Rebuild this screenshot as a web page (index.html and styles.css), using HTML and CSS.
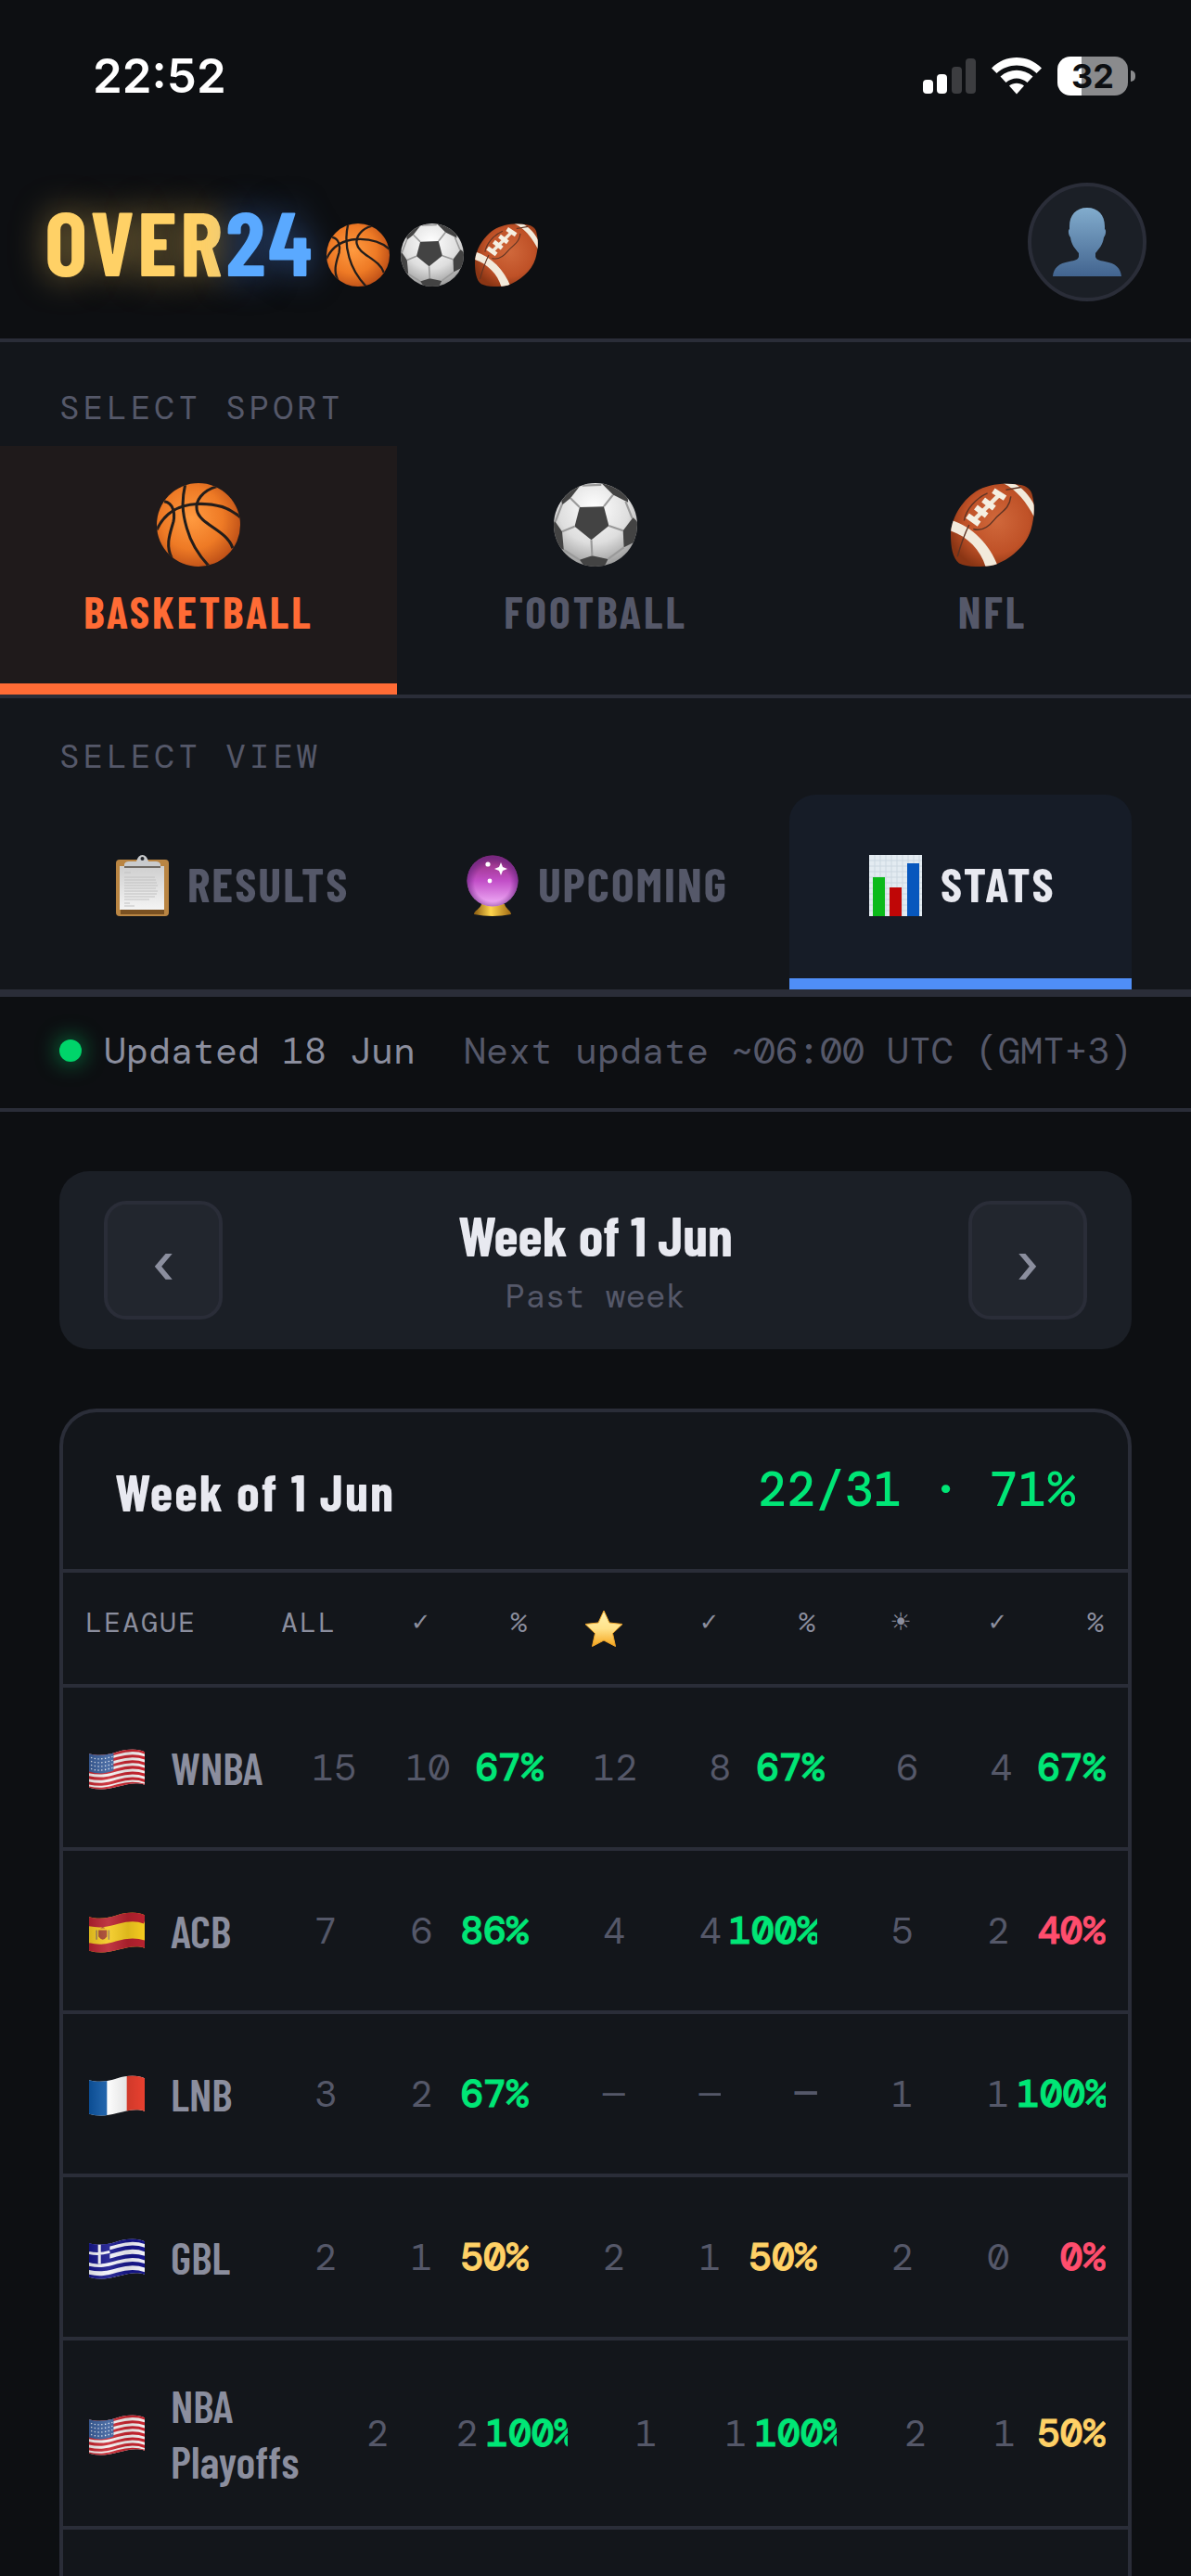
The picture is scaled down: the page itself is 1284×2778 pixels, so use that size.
FILE: index.html
```html
<!DOCTYPE html>
<html lang="en">
<head>
    <meta charset="UTF-8">
    <meta name="viewport" content="width=device-width, initial-scale=1.0">
    <title>OVER24</title>
    <link rel="stylesheet" href="styles.css">
</head>
<body>
    <!-- shared icons -->
    <svg class="sprite" aria-hidden="true">
        <defs>
            <radialGradient id="orangeBall" cx="42%" cy="42%" r="62%">
                <stop offset="0" stop-color="#ff9a40"/><stop offset="0.6" stop-color="#ee7a25"/><stop offset="1" stop-color="#bd4f17"/>
            </radialGradient>
            <radialGradient id="whiteBall" cx="48%" cy="30%" r="70%">
                <stop offset="0" stop-color="#ffffff"/><stop offset="0.6" stop-color="#dedede"/><stop offset="1" stop-color="#9c9c9c"/>
            </radialGradient>
            <radialGradient id="brownBall" cx="55%" cy="45%" r="60%">
                <stop offset="0" stop-color="#d0683b"/><stop offset="0.65" stop-color="#bf5127"/><stop offset="1" stop-color="#8a3514"/>
            </radialGradient>
            <linearGradient id="person" x1="0" y1="0" x2="0" y2="1">
                <stop offset="0" stop-color="#82accd"/><stop offset="1" stop-color="#42648f"/>
            </linearGradient>
            <linearGradient id="paper" x1="0" y1="0" x2="0" y2="1">
                <stop offset="0" stop-color="#cfcfcf"/><stop offset="1" stop-color="#f4f4f4"/>
            </linearGradient>
            <linearGradient id="orb" x1="0" y1="0" x2="0" y2="1">
                <stop offset="0" stop-color="#8d2a70"/><stop offset="0.5" stop-color="#c24fc8"/><stop offset="1" stop-color="#f3b4fa"/>
            </linearGradient>
            <radialGradient id="orbEdge" cx="50%" cy="55%" r="50%">
                <stop offset="0.7" stop-color="#6d2683" stop-opacity="0"/><stop offset="1" stop-color="#6d2683" stop-opacity="0.7"/>
            </radialGradient>
            <linearGradient id="gold" x1="0" y1="0" x2="1" y2="0">
                <stop offset="0" stop-color="#8a5a10"/><stop offset="0.45" stop-color="#ffd54d"/><stop offset="1" stop-color="#a06a14"/>
            </linearGradient>
            <linearGradient id="starFill" x1="0" y1="0" x2="0" y2="1">
                <stop offset="0" stop-color="#fff3b0"/><stop offset="0.5" stop-color="#ffe28a"/><stop offset="1" stop-color="#f5a51c"/>
            </linearGradient>
            <linearGradient id="shade" x1="0" y1="0" x2="1" y2="0">
                <stop offset="0" stop-color="#000" stop-opacity="0.12"/><stop offset="0.35" stop-color="#fff" stop-opacity="0.1"/><stop offset="0.7" stop-color="#000" stop-opacity="0.1"/><stop offset="1" stop-color="#000" stop-opacity="0"/>
            </linearGradient>
            <clipPath id="ballClip"><circle cx="50" cy="50" r="50"/></clipPath>
            <clipPath id="nflClip"><path d="M0 62C0 44 12 22 30 10C44 1 64 -1 82 2C91 3 97 8 98 16C101 28 100 42 96 56C90 76 70 92 52 98C38 101 20 101 10 96C2 90 0 76 0 62Z"/></clipPath>
            <clipPath id="flagClip"><path d="M0 5C12 8 20 6 30 3S50 -1 59 3V38C50 35 42 37 30 40S12 44 0 41Z"/></clipPath>
            <path id="wave" d="M-1 0C12 3 20 1 30 -2S50 -6 60 -2" fill="none"/>
        </defs>

        <symbol id="basketball" viewBox="0 0 100 100">
            <circle cx="50" cy="50" r="50" fill="url(#orangeBall)"/>
            <g clip-path="url(#ballClip)" fill="none" stroke="#221d1b" stroke-width="3.4">
                <path d="M34 2C30 20 30 34 36 54C41 72 50 86 62 99"/>
                <path d="M72 4C54 9 46 22 48 32C51 50 84 56 91 78"/>
                <path d="M0 56C10 34 28 26 48 25C70 24 88 30 100 41"/>
                <path d="M9 22C20 24 22 36 20 46C16 60 10 74 18 90"/>
            </g>
        </symbol>

        <symbol id="soccer" viewBox="0 0 100 100">
            <circle cx="50" cy="50" r="50" fill="url(#whiteBall)"/>
            <g clip-path="url(#ballClip)">
                <g fill="#434343">
                    <path d="M31 29L60 28L66 51L45 68L25 52Z"/>
                    <path d="M57 0L71 14L89 23L88 8L70 0Z"/>
                    <path d="M34 0L20 18L10 26L8 14L22 2Z"/>
                    <path d="M83 57L95 41L104 50L98 70L84 77Z"/>
                    <path d="M10 58L1 45L-4 60L4 76L12 80Z"/>
                    <path d="M31 92L46 87L65 91L60 101L38 101Z"/>
                </g>
                <path d="M60 28L71 14M31 29L20 18M66 51L83 57M25 52L10 58M45 68L46 87M84 77L65 91M12 80L31 92M94 42L86 22M2 46L10 25M34 3L57 2" fill="none" stroke="#9a9a9a" stroke-width="2.4"/>
            </g>
        </symbol>

        <symbol id="nfl" viewBox="0 0 100 100">
            <g clip-path="url(#nflClip)">
                <rect width="100" height="100" fill="url(#brownBall)"/>
                <path d="M60 -1C78 6 92 24 101 43V28C94 14 86 6 74 -1Z" fill="#f2eadb"/>
                <path d="M-1 44C26 52 47 74 57 101H42C36 80 20 64 -1 57Z" fill="#f2eadb"/>
                <path d="M8 88C12 74 16 62 22 50M16 45C18 32 30 18 44 12M72 16C70 32 60 34 52 44C44 54 36 58 27 55M66 8L84 5" fill="none" stroke="#5f3424" stroke-width="1.6"/>
                <path d="M26 46L60 12" stroke="#f2eadb" stroke-width="5"/>
                <path d="M20 39L34 49M30 29L43 39M39 20L52 30M51 9L65 18" stroke="#f5efe2" stroke-width="7"/>
            </g>
        </symbol>

        <symbol id="star" viewBox="0 0 42 40">
            <path d="M21 0L27 13L41 14.500L30.500 24.500L33.500 38.500L21 32L8.500 38.500L11.500 24.500L1 14.500L15 13Z" fill="url(#starFill)" stroke="#f0a52a" stroke-width="1" stroke-linejoin="round"/>
        </symbol>

        <symbol id="flag-us" viewBox="0 0 59 43">
            <g clip-path="url(#flagClip)">
                <rect width="59" height="43" fill="#f4f0f0"/>
                <g stroke="#c9252f" stroke-width="3">
                    <use href="#wave" y="6"/><use href="#wave" y="12"/><use href="#wave" y="18"/><use href="#wave" y="24"/><use href="#wave" y="30"/><use href="#wave" y="36"/><use href="#wave" y="41"/>
                </g>
                <path d="M0 4C10 7 18 6 26 3V23C18 26 10 27 0 24Z" fill="#3a5f9c"/>
                <path d="M2 9C10 12 18 10 25 8M2 13C10 16 18 14 25 12M2 17C10 20 18 18 25 16M2 21C10 24 18 22 25 20" fill="none" stroke="#dfe6f2" stroke-width="1.300" stroke-dasharray="1.300 2.400"/>
                <rect width="59" height="43" fill="url(#shade)"/>
            </g>
        </symbol>

        <symbol id="flag-es" viewBox="0 0 59 43">
            <g clip-path="url(#flagClip)">
                <rect width="59" height="43" fill="#f5cb1f"/>
                <use href="#wave" y="9" stroke="#b8222f" stroke-width="11"/>
                <use href="#wave" y="38" stroke="#b8222f" stroke-width="11"/>
                <path d="M10 19h9v7q-4.500 6-9 0Z" fill="#a8452d"/>
                <path d="M8 19v10M21 19v10" stroke="#9c7a55" stroke-width="1.500"/>
                <path d="M12 17q2.500-3 5 0Z" fill="#a8452d"/>
                <rect width="59" height="43" fill="url(#shade)"/>
            </g>
        </symbol>

        <symbol id="flag-fr" viewBox="0 0 59 43">
            <g clip-path="url(#flagClip)">
                <rect width="59" height="43" fill="#fbfbfb"/>
                <rect width="19" height="43" fill="#0d57a6"/>
                <rect x="40" width="19" height="43" fill="#e8402f"/>
                <rect width="59" height="43" fill="url(#shade)"/>
            </g>
        </symbol>

        <symbol id="flag-gr" viewBox="0 0 59 43">
            <g clip-path="url(#flagClip)">
                <rect width="59" height="43" fill="#f2f3fa"/>
                <g stroke="#16168c" stroke-width="4.200">
                    <use href="#wave" y="6"/><use href="#wave" y="14"/><use href="#wave" y="23"/><use href="#wave" y="31"/><use href="#wave" y="40"/>
                </g>
                <path d="M0 4C8 7 15 6 22 4V24C15 27 8 28 0 25Z" fill="#16168c"/>
                <path d="M11 5V27M0 15C8 17 15 16 22 14" fill="none" stroke="#f2f3fa" stroke-width="3"/>
                <rect width="59" height="43" fill="url(#shade)"/>
            </g>
        </symbol>
    </svg>

    <div class="status-bar">
        <span class="time">22:52</span>
        <div class="indicators">
            <svg class="signal" viewBox="0 0 57 40" aria-label="Signal">
                <rect x="0" y="24" width="11" height="15" rx="4" fill="#fff"/>
                <rect x="15" y="18" width="11" height="21" rx="4" fill="#fff"/>
                <rect x="31" y="10" width="11" height="29" rx="4" fill="#3c3d40"/>
                <rect x="46" y="1" width="11" height="38" rx="4" fill="#3c3d40"/>
            </svg>
            <svg class="wifi" viewBox="0 0 54 40" aria-label="Wi-Fi">
                <path d="M0 11.500C15 -3.800 39 -3.800 54 11.500L48.500 17C36.500 5.500 17.500 5.500 5.500 17Z" fill="#fff"/>
                <path d="M9.500 20.500C19.500 11.500 34.500 11.500 44.500 20.500L38.500 27C31.500 21 22.500 21 15.500 27Z" fill="#fff"/>
                <path d="M19 30.500C23.500 26.800 30.500 26.800 35 30.500L27 39.500Z" fill="#fff"/>
            </svg>
            <div class="battery"><span class="battery-level">32</span></div>
        </div>
    </div>

    <header class="header">
        <a class="logo" href="#"><span class="logo-over">OVER</span><span class="logo-24">24</span><span class="logo-balls"><svg><use href="#basketball"/></svg><svg><use href="#soccer"/></svg><svg><use href="#nfl"/></svg></span></a>
        <button class="avatar" aria-label="Profile">
            <svg viewBox="0 0 74 74"><path d="M37 0C49 0 56 8 56 20V23C58 24 57 30 55 32C54 40 50 44 46 49V53C47 56 50 57 56 58C68 60 73 65 74 74H0C1 65 6 60 18 58C24 57 27 56 28 53V49C24 44 20 40 19 32C17 30 16 24 18 23V20C18 8 25 0 37 0Z" fill="url(#person)"/></svg>
        </button>
    </header>

    <nav class="sports">
        <div class="section-label">SELECT SPORT</div>
        <div class="sport-tabs">
            <button class="sport-tab active"><svg><use href="#basketball"/></svg>BASKETBALL</button>
            <button class="sport-tab"><svg><use href="#soccer"/></svg>FOOTBALL</button>
            <button class="sport-tab"><svg><use href="#nfl"/></svg>NFL</button>
        </div>
    </nav>

    <nav class="views">
        <div class="section-label">SELECT VIEW</div>
        <div class="view-tabs">
            <button class="view-tab">
                <svg viewBox="0 0 57 66">
                    <rect y="5" width="57" height="61" rx="4" fill="#b98543"/>
                    <path d="M5 59H52V64H5Z" fill="#7a5122"/>
                    <rect x="4" y="12" width="48" height="47" fill="url(#paper)"/>
                    <path d="M9 19H16M9 24H42M9 27H43M9 30H44M9 33H45M9 36H43M9 39H45M9 42H44M9 45H42M9 48H36M9 52H15M9 55H20" stroke="#c2c2c2" stroke-width="1.200"/>
                    <path d="M9 14V10Q10 7 14 7H22Q24 0 28.500 0T35 7H43Q47 7 48 10V14Z" fill="#c9cbcd"/>
                    <path d="M9 12H48V14H9Z" fill="#6f6b66"/>
                    <circle cx="28.500" cy="4" r="2" fill="#22252a"/>
                </svg>RESULTS
            </button>
            <button class="view-tab">
                <svg viewBox="0 0 57 66">
                    <path d="M16 53H41C42 58 48 60 48 64Q28 68 8 64C8 60 15 58 16 53Z" fill="url(#gold)"/>
                    <circle cx="28" cy="28" r="27.500" fill="url(#orb)"/>
                    <circle cx="28" cy="28" r="27.500" fill="url(#orbEdge)"/>
                    <path d="M37 8L39 13L44 15L39 17L37 22L35 17L30 15L35 13Z" fill="#fff"/>
                    <circle cx="23" cy="10" r="2.600" fill="#fff"/><circle cx="25" cy="28" r="2.400" fill="#fff"/>
                </svg>UPCOMING
            </button>
            <button class="view-tab active">
                <svg viewBox="0 0 57 66">
                    <rect width="57" height="66" fill="#e3ebf1"/>
                    <path d="M0 6H57M0 12H57M0 18H57M0 24H57M0 30H57M0 36H57M0 42H57M0 48H57M0 54H57M0 60H57M6 0V66M12 0V66M18 0V66M24 0V66M30 0V66M36 0V66M42 0V66M48 0V66M54 0V66" stroke="#cbd7e0" stroke-width="1"/>
                    <rect x="4" y="24" width="13" height="42" fill="#0cba1a"/>
                    <rect x="22" y="35" width="13" height="31" fill="#bf0606"/>
                    <rect x="41" y="9" width="13" height="57" fill="#0757bd"/>
                </svg>STATS
            </button>
        </div>
    </nav>

    <div class="update-bar">
        <span class="updated"><span class="dot"></span>Updated 18 Jun</span>
        <span class="next-update">Next update ~06:00 UTC (GMT+3)</span>
    </div>

    <main>
        <div class="week-nav">
            <button aria-label="Previous week">‹</button>
            <div class="week-title">
                <h1>Week of 1 Jun</h1>
                <p>Past week</p>
            </div>
            <button aria-label="Next week">›</button>
        </div>

        <section class="card">
            <div class="card-header">
                <h2>Week of 1 Jun</h2>
                <span class="score">22/31 · 71%</span>
            </div>
            <table class="stats">
                <thead>
                    <tr>
                        <th>LEAGUE</th>
                        <th>ALL</th><th class="sym">✓</th><th>%</th>
                        <th><svg class="star" aria-label="Starred"><use href="#star"/></svg></th><th class="sym">✓</th><th>%</th>
                        <th class="sym">☀</th><th class="sym">✓</th><th>%</th>
                    </tr>
                </thead>
                <tbody>
                    <tr>
                        <th><svg class="flag"><use href="#flag-us"/></svg><span>WNBA</span></th>
                        <td>15</td><td>10</td><td class="pct good">67%</td>
                        <td>12</td><td>8</td><td class="pct good">67%</td>
                        <td>6</td><td>4</td><td class="pct good">67%</td>
                    </tr>
                    <tr>
                        <th><svg class="flag"><use href="#flag-es"/></svg><span>ACB</span></th>
                        <td>7</td><td>6</td><td class="pct good">86%</td>
                        <td>4</td><td>4</td><td class="pct good">100%</td>
                        <td>5</td><td>2</td><td class="pct bad">40%</td>
                    </tr>
                    <tr>
                        <th><svg class="flag"><use href="#flag-fr"/></svg><span>LNB</span></th>
                        <td>3</td><td>2</td><td class="pct good">67%</td>
                        <td>—</td><td>—</td><td class="pct">—</td>
                        <td>1</td><td>1</td><td class="pct good">100%</td>
                    </tr>
                    <tr>
                        <th><svg class="flag"><use href="#flag-gr"/></svg><span>GBL</span></th>
                        <td>2</td><td>1</td><td class="pct mid">50%</td>
                        <td>2</td><td>1</td><td class="pct mid">50%</td>
                        <td>2</td><td>0</td><td class="pct bad">0%</td>
                    </tr>
                    <tr>
                        <th><svg class="flag"><use href="#flag-us"/></svg><span>NBA Playoffs</span></th>
                        <td>2</td><td>2</td><td class="pct good">100%</td>
                        <td>1</td><td>1</td><td class="pct good">100%</td>
                        <td>2</td><td>1</td><td class="pct mid">50%</td>
                    </tr>
                </tbody>
            </table>
        </section>
    </main>
</body>
</html>
```

FILE: styles.css
```css
:root {
    --bg: #0d0f12;
    --panel: #13161b;
    --panel2: #1b1f26;
    --panel3: #22262e;
    --line: #2a2d38;
    --text: #e8e9f0;
    --text2: #8b8e9e;
    --muted: #555869;
    --orange: #ff6b35;
    --blue: #4f8ef7;
    --green: #00e676;
    --yellow: #ffd166;
    --red: #ff4d6d;
    --cond: "Barlow Condensed", "Liberation Sans Narrow", Roboto, sans-serif;
    --mono: "DM Mono", "Roboto Mono", "Liberation Mono", monospace;
}

* {
    box-sizing: border-box;
    margin: 0;
    padding: 0;
}

body {
    display: flex;
    flex-direction: column;
    min-height: 100vh;
    background: var(--bg);
    color: var(--text);
    font-family: var(--cond);
}

button {
    border: none;
    background: none;
    color: inherit;
    font-family: inherit;
    cursor: pointer;
}

svg {
    display: block;
    flex: none;
}

.sprite {
    position: absolute;
    width: 0;
    height: 0;
}

/* status bar */
.status-bar {
    display: flex;
    justify-content: space-between;
    align-items: center;
    height: 157px;
    padding: 6px 60px 0 100px;
    font-family: Inter, sans-serif;
    color: #fff;
}

.time {
    font-size: 51px;
    font-weight: 600;
}

.indicators {
    display: flex;
    align-items: center;
    gap: 17px;
}

.signal {
    width: 57px;
    height: 40px;
}

.wifi {
    width: 54px;
    height: 40px;
}

.battery {
    position: relative;
    width: 76px;
    height: 42px;
    margin-right: 8px;
    border-radius: 14px;
    background: linear-gradient(to right, #fff 34%, #8a8b8d 34%);
    color: var(--bg);
    font-size: 36px;
    font-weight: 700;
    line-height: 42px;
    text-align: center;
}

.battery::after {
    content: "";
    position: absolute;
    top: 15px;
    right: -8px;
    width: 5px;
    height: 12px;
    border-radius: 0 5px 5px 0;
    background: #8a8b8d;
}

/* header */
.header {
    display: flex;
    justify-content: space-between;
    align-items: center;
    padding: 40px 48px;
    border-bottom: 4px solid var(--line);
}

.logo {
    display: flex;
    align-items: baseline;
    padding-bottom: 4px;
    font-size: 98px;
    font-weight: 700;
    line-height: 120px;
    letter-spacing: 3px;
    text-decoration: none;
}

.logo-over {
    color: var(--yellow);
    text-shadow: 0 0 36px rgba(255, 209, 102, 0.5);
}

.logo-24 {
    color: #5aa9ff;
    text-shadow: 0 0 36px rgba(79, 142, 247, 0.5);
}

.logo-balls {
    display: flex;
    align-self: flex-end;
    gap: 12px;
    margin: 0 0 10px 12px;
}

.logo-balls svg {
    width: 68px;
    height: 68px;
}

.avatar {
    display: flex;
    justify-content: center;
    align-items: center;
    width: 128px;
    height: 128px;
    border: 4px solid var(--line);
    border-radius: 50%;
    background: var(--panel2);
}

.avatar svg {
    width: 74px;
    height: 74px;
}

/* tabs */
.sports {
    background: var(--panel);
    border-bottom: 4px solid var(--line);
}

.section-label {
    padding: 46px 64px 16px;
    color: var(--muted);
    font-family: var(--mono);
    font-size: 36px;
    line-height: 50px;
    letter-spacing: 4px;
}

.sport-tabs {
    display: grid;
    grid-template-columns: repeat(3, 1fr);
}

.sport-tab {
    display: flex;
    flex-direction: column;
    align-items: center;
    gap: 16px;
    padding: 40px 0 46px;
    border-bottom: 12px solid transparent;
    color: var(--muted);
    font-size: 48px;
    font-weight: 700;
    line-height: 64px;
    letter-spacing: 3px;
}

.sport-tab svg {
    width: 90px;
    height: 90px;
}

.sport-tab.active {
    border-color: var(--orange);
    background: #1f1a1b;
    color: var(--orange);
}

.views {
    background: var(--panel);
    border-bottom: 8px solid var(--line);
}

.views .section-label {
    padding: 38px 64px 16px;
}

.view-tabs {
    display: grid;
    grid-template-columns: repeat(3, 1fr);
    gap: 24px;
    padding: 0 64px;
}

.view-tab {
    display: flex;
    justify-content: center;
    align-items: center;
    gap: 20px;
    height: 210px;
    padding: 0 0 8px 4px;
    border-bottom: 12px solid transparent;
    color: var(--muted);
    font-size: 52px;
    font-weight: 700;
    letter-spacing: 2px;
}

.view-tab svg {
    width: 57px;
    height: 66px;
    margin-top: 6px;
}

.view-tab.active {
    border-color: var(--blue);
    border-radius: 28px 28px 0 0;
    background: #161c27;
    color: var(--text);
}

/* update info */
.update-bar {
    display: flex;
    justify-content: space-between;
    align-items: center;
    height: 124px;
    padding: 0 64px 4px;
    border-bottom: 4px solid var(--line);
    color: var(--muted);
    font-family: var(--mono);
    font-size: 40px;
}

.updated {
    display: flex;
    align-items: center;
    gap: 24px;
    color: var(--text2);
}

.dot {
    width: 24px;
    height: 24px;
    border-radius: 50%;
    background: #00d46a;
    box-shadow: 0 0 24px rgba(0, 212, 106, 0.7);
}

main {
    display: flex;
    flex: 1;
    flex-direction: column;
    gap: 64px;
    padding: 64px 64px 0;
}

/* week switcher */
.week-nav {
    display: flex;
    justify-content: space-between;
    align-items: center;
    padding: 32px 48px;
    border-radius: 32px;
    background: var(--panel2);
}

.week-nav button {
    width: 128px;
    height: 128px;
    padding-top: 6px;
    border: 4px solid var(--line);
    border-radius: 24px;
    background: var(--panel3);
    color: var(--text2);
    font-family: Inter, sans-serif;
    font-size: 60px;
    font-weight: 500;
}

.week-title {
    text-align: center;
}

.week-title h1 {
    font-size: 60px;
    font-weight: 700;
    line-height: 72px;
}

.week-title p {
    padding-top: 6px;
    color: var(--muted);
    font-family: var(--mono);
    font-size: 36px;
    line-height: 50px;
}

/* stats card, runs off the bottom of the screen */
.card {
    flex: 1;
    border: 4px solid var(--line);
    border-bottom: none;
    border-radius: 40px 40px 0 0;
    background: var(--panel);
}

.card-header {
    display: flex;
    justify-content: space-between;
    align-items: center;
    height: 173px;
    padding: 0 56px;
    border-bottom: 4px solid var(--line);
}

.card-header h2 {
    font-size: 56px;
    font-weight: 700;
    letter-spacing: 2px;
}

.score {
    padding-bottom: 4px;
    color: var(--green);
    font-family: var(--mono);
    font-size: 52px;
    font-weight: 500;
}

.stats {
    display: block;
}

.stats thead,
.stats tbody {
    display: block;
}

/* every row sizes its own columns */
.stats tr {
    display: grid;
    grid-template-columns: 35fr repeat(9, 20fr);
    column-gap: 8px;
    align-items: center;
    min-height: 176px;
    padding: 40px 24px;
    border-bottom: 4px solid var(--line);
}

.stats th,
.stats td {
    min-width: 0;
    text-align: right;
    font-family: var(--mono);
    font-weight: 400;
}

.stats thead tr {
    min-height: 124px;
    padding: 0 24px 14px;
}

.stats thead th {
    color: var(--text2);
    font-size: 30px;
    letter-spacing: 2px;
}

.stats thead .sym {
    font-family: "DejaVu Sans", sans-serif;
    font-size: 26px;
}

.stats thead th:first-child,
.stats tbody th {
    text-align: left;
}

.star {
    width: 42px;
    height: 40px;
    margin: 16px 2px 0 auto;
}

.stats tbody th {
    display: flex;
    align-items: center;
    gap: 28px;
    min-width: min-content;
    padding-left: 4px;
    color: var(--text2);
    font-family: var(--cond);
    font-size: 48px;
    font-weight: 600;
    line-height: 60px;
}

.flag {
    width: 60px;
    height: 44px;
    margin-top: 4px;
}

.stats td {
    overflow: hidden;
    color: var(--muted);
    font-size: 40px;
}

.stats .pct {
    font-size: 41px;
    font-weight: 700;
}

/* DM Mono stops at medium, thicken the rates a little */
.stats .good,
.stats .mid,
.stats .bad {
    -webkit-text-stroke: 1px currentColor;
}

.stats .good {
    color: var(--green);
}

.stats .mid {
    color: var(--yellow);
}

.stats .bad {
    color: var(--red);
}
```
